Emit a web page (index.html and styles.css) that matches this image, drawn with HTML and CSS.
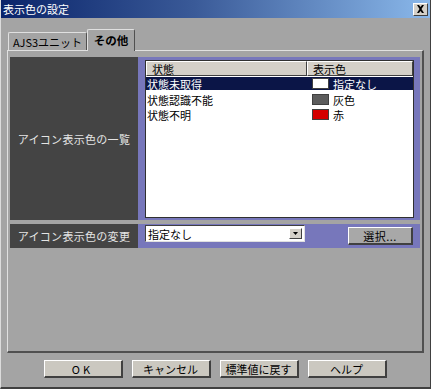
FILE: index.html
```html
<!DOCTYPE html>
<html lang="ja">
<head>
<meta charset="utf-8">
<title>表示色の設定</title>
<link rel="stylesheet" href="styles.css">
</head>
<body>
<div class="window">
  <div class="titlebar">
    <span class="title">表示色の設定</span>
    <span class="close"><svg width="9" height="8" viewBox="0 0 9 8"><path d="M1 0h2l1.5 2L6 0h2L5.5 4 8 8H6L4.5 6 3 8H1l2.5-4z" fill="#000"/></svg></span>
  </div>
  <div class="tabs">
    <div class="tab">AJS3ユニット</div>
    <div class="tab active">その他</div>
  </div>
  <div class="panel">
    <div class="row row-list">
      <div class="label">アイコン表示色の一覧</div>
      <div class="field field-list">
        <div class="list">
          <div class="list-head">
            <div class="hcell c1">状態</div>
            <div class="hcell c2">表示色</div>
          </div>
          <div class="list-row selected">
            <div class="cell c1">状態未取得</div>
            <div class="cell c2"><span class="swatch sw-none"></span>指定なし</div>
          </div>
          <div class="list-row">
            <div class="cell c1">状態認識不能</div>
            <div class="cell c2"><span class="swatch sw-gray"></span>灰色</div>
          </div>
          <div class="list-row">
            <div class="cell c1">状態不明</div>
            <div class="cell c2"><span class="swatch sw-red"></span>赤</div>
          </div>
        </div>
      </div>
    </div>
    <div class="row row-change">
      <div class="label">アイコン表示色の変更</div>
      <div class="field field-change">
        <div class="combo">
          <span class="combo-text">指定なし</span>
          <span class="combo-arrow"><svg width="5" height="3" viewBox="0 0 5 3"><path d="M0 0h5L2.5 3z" fill="#000"/></svg></span>
        </div>
        <div class="btn select-btn">選択...</div>
      </div>
    </div>
  </div>
  <div class="buttons">
    <div class="btn btn-ok">OK</div>
    <div class="btn">キャンセル</div>
    <div class="btn">標準値に戻す</div>
    <div class="btn">ヘルプ</div>
  </div>
</div>
</body>
</html>
```

FILE: styles.css
```css
* { box-sizing: border-box; }
html, body { margin: 0; padding: 0; }
body {
  width: 431px;
  height: 389px;
  overflow: hidden;
  font-family: "Noto Sans CJK JP", "Noto Sans", sans-serif;
  font-size: 11px;
  line-height: 12px;
  white-space: nowrap;
}
.window {
  width: 431px;
  height: 389px;
  background: #a4a4a4;
  border-left: 1px solid #dcdcdc;
  border-right: 1px solid #404040;
  border-bottom: 2px solid #404040;
  display: flex;
  flex-direction: column;
}
.titlebar {
  height: 18px;
  flex: none;
  background: linear-gradient(to right, #0a246a 0%, #3a5a98 45%, #8ab8ea 100%);
  display: flex;
  align-items: center;
  padding: 0 2px 0 2px;
}
.title {
  color: #fff;
  font-size: 11px;
  flex: 1;
}
.close {
  width: 15px;
  height: 13px;
  background: #d4d0c8;
  border-top: 1px solid #fff;
  border-left: 1px solid #fff;
  border-right: 1px solid #404040;
  border-bottom: 1px solid #404040;
  display: flex;
  align-items: center;
  justify-content: center;
}
.tabs {
  flex: none;
  height: 21px;
  margin-top: 11px;
  padding-left: 7px;
  display: flex;
  align-items: flex-end;
}
.tab {
  height: 18px;
  width: 79px;
  flex: none;
  display: flex;
  align-items: center;
  justify-content: center;
  background: #a4a4a4;
  border-top: 1px solid #e0e0e0;
  border-left: 1px solid #e0e0e0;
  border-right: 1px solid #505050;
  border-radius: 2px 2px 0 0;
  color: #000;
}
.tab.active {
  width: 48px;
  height: 22px;
  margin-bottom: -1px;
  position: relative;
  z-index: 1;
  font-weight: bold;
  font-size: 11.5px;
  padding-bottom: 2px;
}
.panel {
  flex: none;
  height: 303px;
  margin: 0 6px 0 6px;
  border-top: 1px solid #e0e0e0;
  border-left: 1px solid #e0e0e0;
  border-right: 2px solid #505050;
  border-bottom: 2px solid #505050;
  padding: 6px 2px 0 2px;
  display: flex;
  flex-direction: column;
  gap: 4px;
}
.row {
  display: flex;
}
.row-list { height: 163px; }
.row-change { height: 24px; }
.label {
  width: 128px;
  flex: none;
  background: #444444;
  color: #e4e4e4;
  display: flex;
  align-items: center;
  justify-content: center;
  letter-spacing: 0.3px;
}
.field {
  flex: 1;
  background: #7777bb;
}
.field-list {
  padding: 3px 6px 2px 7px;
}
.list {
  height: 100%;
  background: #fff;
  border: 1px solid #303030;
}
.list-head {
  display: flex;
  height: 15px;
  margin-bottom: 1px;
}
.hcell {
  background: #d4d0c8;
  border-top: 1px solid #fff;
  border-left: 1px solid #fff;
  border-right: 1px solid #404040;
  border-bottom: 1px solid #404040;
  display: flex;
  align-items: center;
  padding-left: 5px;
}
.c1 { width: 161px; flex: none; }
.c2 { flex: 1; }
.list-row {
  display: flex;
  height: 15px;
  align-items: center;
  color: #000;
}
.list-row.selected {
  background: #0b1547;
  color: #fff;
  height: 13px;
  margin: 0 0 2px 0;
}
.cell.c1 { padding-left: 1px; }
.cell.c2 { display: flex; align-items: center; padding-left: 5px; }
.swatch {
  width: 17px;
  height: 11px;
  margin-right: 4px;
  border: 1px solid #404040;
  display: inline-block;
  flex: none;
}
.sw-none { background: #fff; }
.sw-gray { background: #5c5c5c; }
.sw-red { background: #d40000; }
.field-change {
  display: flex;
  align-items: flex-start;
  padding: 1px 7px 0 7px;
}
.combo {
  width: 160px;
  height: 17px;
  background: #fff;
  border-top: 1px solid #404040;
  border-left: 1px solid #404040;
  border-right: 1px solid #e0e0e0;
  border-bottom: 1px solid #e0e0e0;
  display: flex;
  align-items: center;
  padding: 0 2px 0 2px;
}
.combo-text { flex: 1; color: #000; }
.combo-arrow {
  width: 13px;
  height: 11px;
  background: #d4d0c8;
  border-top: 1px solid #fff;
  border-left: 1px solid #fff;
  border-right: 1px solid #404040;
  border-bottom: 1px solid #404040;
  display: flex;
  align-items: center;
  justify-content: center;
}
.btn {
  width: 79px;
  height: 18px;
  background: #cbc8c0;
  border-top: 1px solid #fff;
  border-left: 1px solid #fff;
  border-right: 2px solid #404040;
  border-bottom: 2px solid #404040;
  display: flex;
  align-items: center;
  justify-content: center;
  color: #000;
}
.select-btn {
  width: 65px;
  margin-left: auto;
  margin-top: 2px;
  letter-spacing: 0.5px;
  background: #a8a8a8;
}
.buttons {
  flex: none;
  margin-top: 7px;
  display: flex;
  justify-content: center;
  gap: 9px;
  padding-right: 1px;
}
.btn-ok { letter-spacing: 3px; }
```
